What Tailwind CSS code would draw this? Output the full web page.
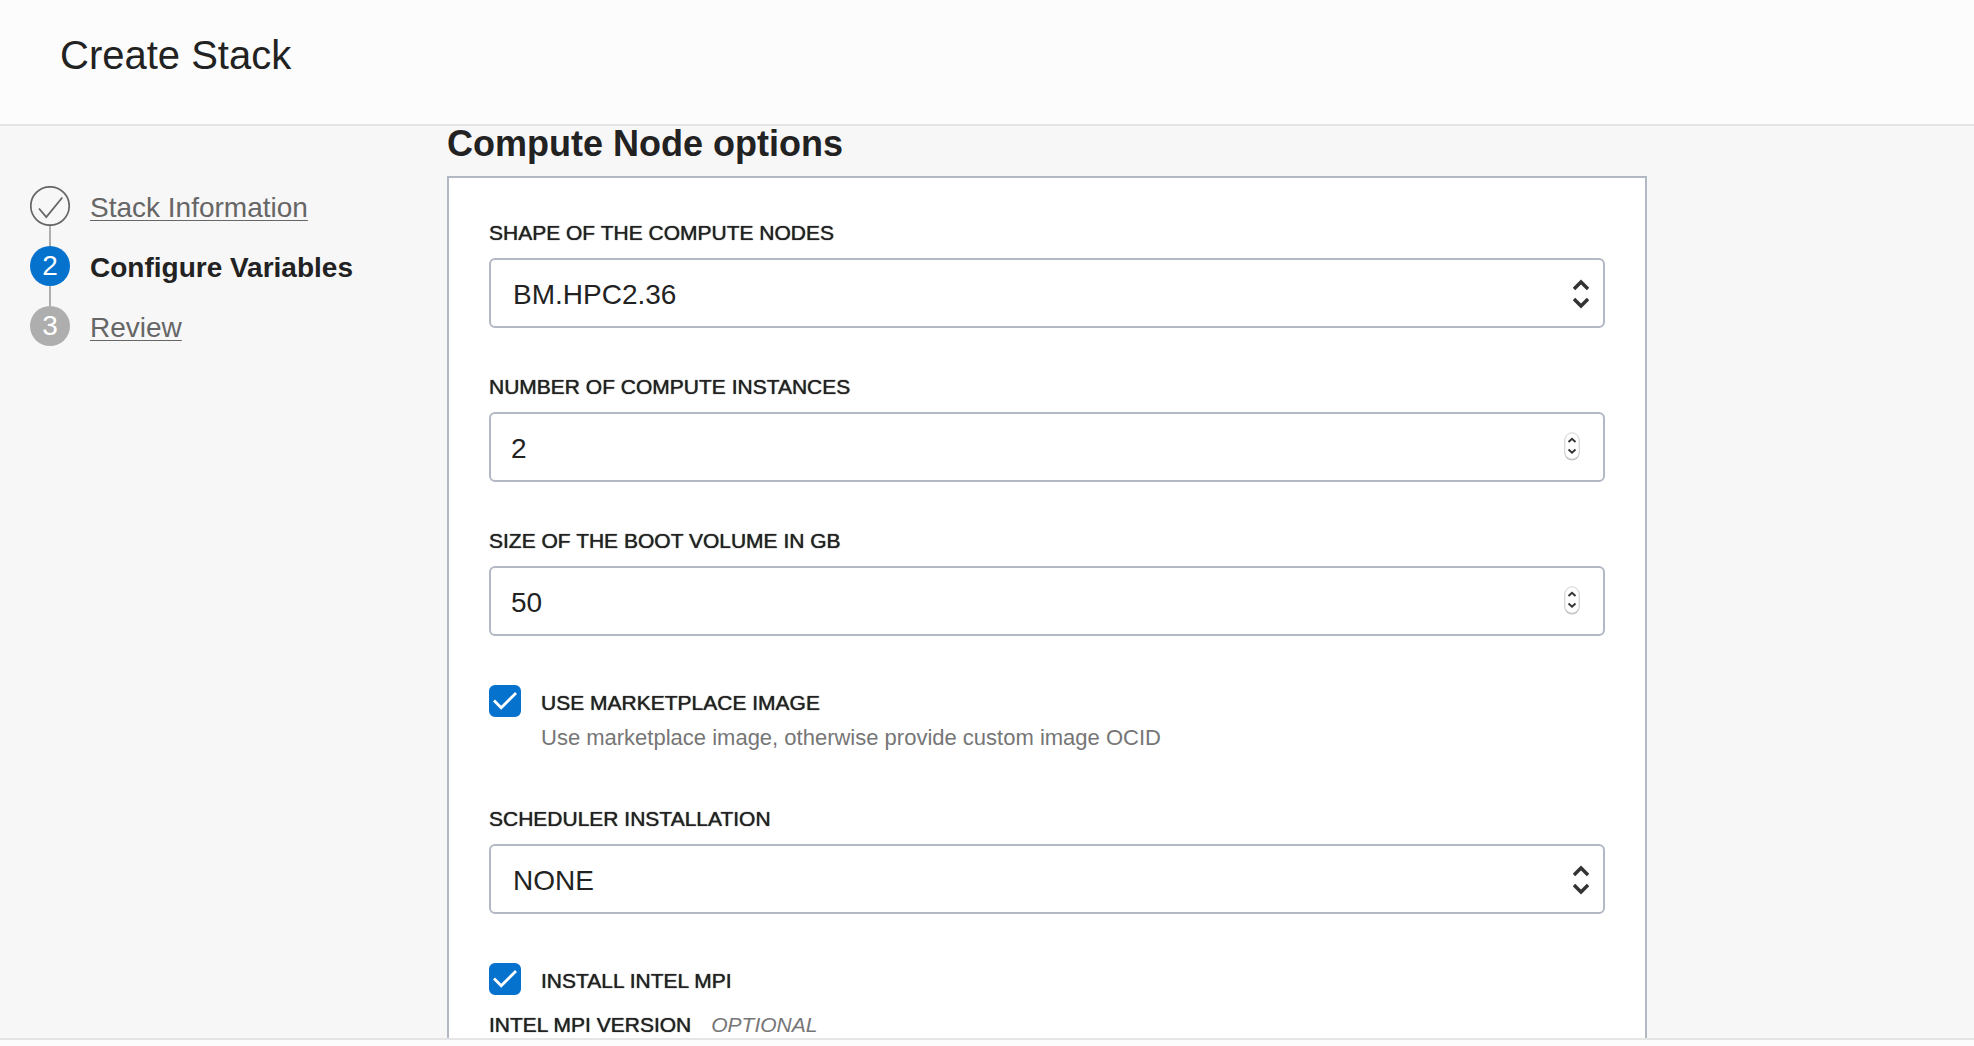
<!DOCTYPE html>
<html lang="en">
<head>
<meta charset="utf-8">
<title>Create Stack</title>
<script src="https://cdn.jsdelivr.net/npm/@tailwindcss/browser@4"></script>
</head>
<body class="flex h-screen flex-col overflow-hidden bg-[#f7f7f7] font-['Liberation_Sans',Arial,sans-serif] text-[#222]">
  <header class="h-[126px] shrink-0 border-b-2 border-[#e5e5e5] bg-[#fcfcfc] px-15 pt-8">
    <h1 class="text-[40px] leading-[46px]">Create Stack</h1>
  </header>

  <div class="flex min-h-0 flex-1">
    <nav aria-label="Steps" class="w-[447px] shrink-0 px-[30px] pt-15 text-[28px] leading-10">
      <ol>
        <li class="flex gap-5">
          <div class="flex flex-col items-center">
            <svg class="size-10" viewBox="0 0 40 40" fill="none" stroke="#666" aria-hidden="true">
              <circle cx="20" cy="20" r="19.2" stroke-width="1.7"/>
              <path d="M9 22.5 16.3 31 32.3 11.5" stroke-width="1.8"/>
            </svg>
            <div class="h-5 w-0.5 bg-[#aeaeae]"></div>
          </div>
          <a href="#" class="pt-0.5 text-[#666] underline decoration-1 underline-offset-3 [text-decoration-skip-ink:none]">Stack Information</a>
        </li>
        <li class="flex gap-5">
          <div class="flex flex-col items-center">
            <span class="size-10 rounded-full bg-[#0572ce] text-center text-white">2</span>
            <div class="h-5 w-0.5 bg-[#aeaeae]"></div>
          </div>
          <span aria-current="step" class="pt-0.5 font-bold">Configure Variables</span>
        </li>
        <li class="flex gap-5">
          <span class="size-10 rounded-full bg-[#aeaeae] text-center text-white">3</span>
          <a href="#" class="pt-0.5 text-[#666] underline decoration-1 underline-offset-3 [text-decoration-skip-ink:none]">Review</a>
        </li>
      </ol>
    </nav>

    <main class="min-w-0 max-w-[1200px] flex-1 overflow-y-auto [scrollbar-width:none]">
      <h2 class="mb-3.5 text-[36px] leading-9 font-bold">Compute Node options</h2>
      <form class="flex flex-col gap-12 border-2 border-[#b2b8c4] bg-white px-10 pt-11 pb-10 text-[21px] leading-[22px]">

        <div class="flex flex-col gap-3.5">
          <label for="shape" class="[text-shadow:0_0_1px_#222]">SHAPE OF THE COMPUTE NODES</label>
          <div class="relative">
            <select id="shape" class="block h-[70px] w-full appearance-none rounded-md border-2 border-[#b2b8c4] bg-white pt-1 pr-12 pl-5.5 text-[28px]">
              <option>BM.HPC2.36</option>
            </select>
            <svg class="pointer-events-none absolute top-5 right-4 h-8 w-4" viewBox="0 0 16 32" fill="none" stroke="#333" stroke-width="3.4" aria-hidden="true">
              <path d="M1 11 8 4 15 11M1 21 8 28 15 21"/>
            </svg>
          </div>
        </div>

        <div class="flex flex-col gap-3.5">
          <label for="count" class="[text-shadow:0_0_1px_#222]">NUMBER OF COMPUTE INSTANCES</label>
          <div class="relative">
            <input id="count" type="number" value="2" class="block h-[70px] w-full rounded-md border-2 border-[#b2b8c4] bg-white pt-1 pr-12 pl-5 text-[28px] [appearance:textfield]">
            <svg class="pointer-events-none absolute top-5 right-6 h-[30px] w-[18px]" viewBox="0 0 18 30" fill="none" aria-hidden="true">
              <rect x="1.5" y="1.5" width="15" height="27" rx="7.5" fill="#bbb"/>
              <rect x="1.8" y=".8" width="14.4" height="26.4" rx="7.2" fill="#fff" stroke="#d2d2d2"/>
              <path d="M5.5 10 9 6.8 12.5 10M5.5 17.5 9 20.7 12.5 17.5" stroke="#333" stroke-width="1.9"/>
            </svg>
          </div>
        </div>

        <div class="flex flex-col gap-3.5">
          <label for="boot" class="[text-shadow:0_0_1px_#222]">SIZE OF THE BOOT VOLUME IN GB</label>
          <div class="relative">
            <input id="boot" type="number" value="50" class="block h-[70px] w-full rounded-md border-2 border-[#b2b8c4] bg-white pt-1 pr-12 pl-5 text-[28px] [appearance:textfield]">
            <svg class="pointer-events-none absolute top-5 right-6 h-[30px] w-[18px]" viewBox="0 0 18 30" fill="none" aria-hidden="true">
              <rect x="1.5" y="1.5" width="15" height="27" rx="7.5" fill="#bbb"/>
              <rect x="1.8" y=".8" width="14.4" height="26.4" rx="7.2" fill="#fff" stroke="#d2d2d2"/>
              <path d="M5.5 10 9 6.8 12.5 10M5.5 17.5 9 20.7 12.5 17.5" stroke="#333" stroke-width="1.9"/>
            </svg>
          </div>
        </div>

        <div class="flex gap-5 pb-2">
          <div class="grid size-8 shrink-0 pt-px">
            <input id="market" type="checkbox" checked aria-describedby="market-hint" class="peer col-start-1 row-start-1 size-8 appearance-none rounded-md border-2 border-[#b2b8c4] checked:border-[#0572ce] checked:bg-[#0572ce]">
            <svg class="pointer-events-none invisible col-start-1 row-start-1 size-8 peer-checked:visible" viewBox="0 0 32 32" fill="none" stroke="#fff" stroke-width="2.8" aria-hidden="true"><path d="M5 15.5 12.2 22.8 27 8"/></svg>
          </div>
          <div class="pt-2">
            <label for="market" class="block [text-shadow:0_0_1px_#222]">USE MARKETPLACE IMAGE</label>
            <p id="market-hint" class="mt-2.5 text-[22px] leading-7 text-[#767676]">Use marketplace image, otherwise provide custom image OCID</p>
          </div>
        </div>

        <div class="flex flex-col gap-3.5">
          <label for="scheduler" class="[text-shadow:0_0_1px_#222]">SCHEDULER INSTALLATION</label>
          <div class="relative">
            <select id="scheduler" class="block h-[70px] w-full appearance-none rounded-md border-2 border-[#b2b8c4] bg-white pt-1 pr-12 pl-5.5 text-[28px]">
              <option>NONE</option>
            </select>
            <svg class="pointer-events-none absolute top-5 right-4 h-8 w-4" viewBox="0 0 16 32" fill="none" stroke="#333" stroke-width="3.4" aria-hidden="true">
              <path d="M1 11 8 4 15 11M1 21 8 28 15 21"/>
            </svg>
          </div>
        </div>

        <div class="flex flex-col gap-5.5">
          <div class="flex h-[30px] gap-5">
            <div class="grid size-8 shrink-0 pt-px">
              <input id="mpi" type="checkbox" checked class="peer col-start-1 row-start-1 size-8 appearance-none rounded-md border-2 border-[#b2b8c4] checked:border-[#0572ce] checked:bg-[#0572ce]">
              <svg class="pointer-events-none invisible col-start-1 row-start-1 size-8 peer-checked:visible" viewBox="0 0 32 32" fill="none" stroke="#fff" stroke-width="2.8" aria-hidden="true"><path d="M5 15.5 12.2 22.8 27 8"/></svg>
            </div>
            <label for="mpi" class="pt-2 [text-shadow:0_0_1px_#222]">INSTALL INTEL MPI</label>
          </div>
          <p class="flex gap-5">
            <span class="[text-shadow:0_0_1px_#222]">INTEL MPI VERSION</span>
            <em class="text-[#767676]">OPTIONAL</em>
          </p>
        </div>
      </form>
    </main>
  </div>

  <footer class="h-2 shrink-0 border-t-2 border-[#e5e5e5] bg-[#fcfcfc]"></footer>
</body>
</html>
